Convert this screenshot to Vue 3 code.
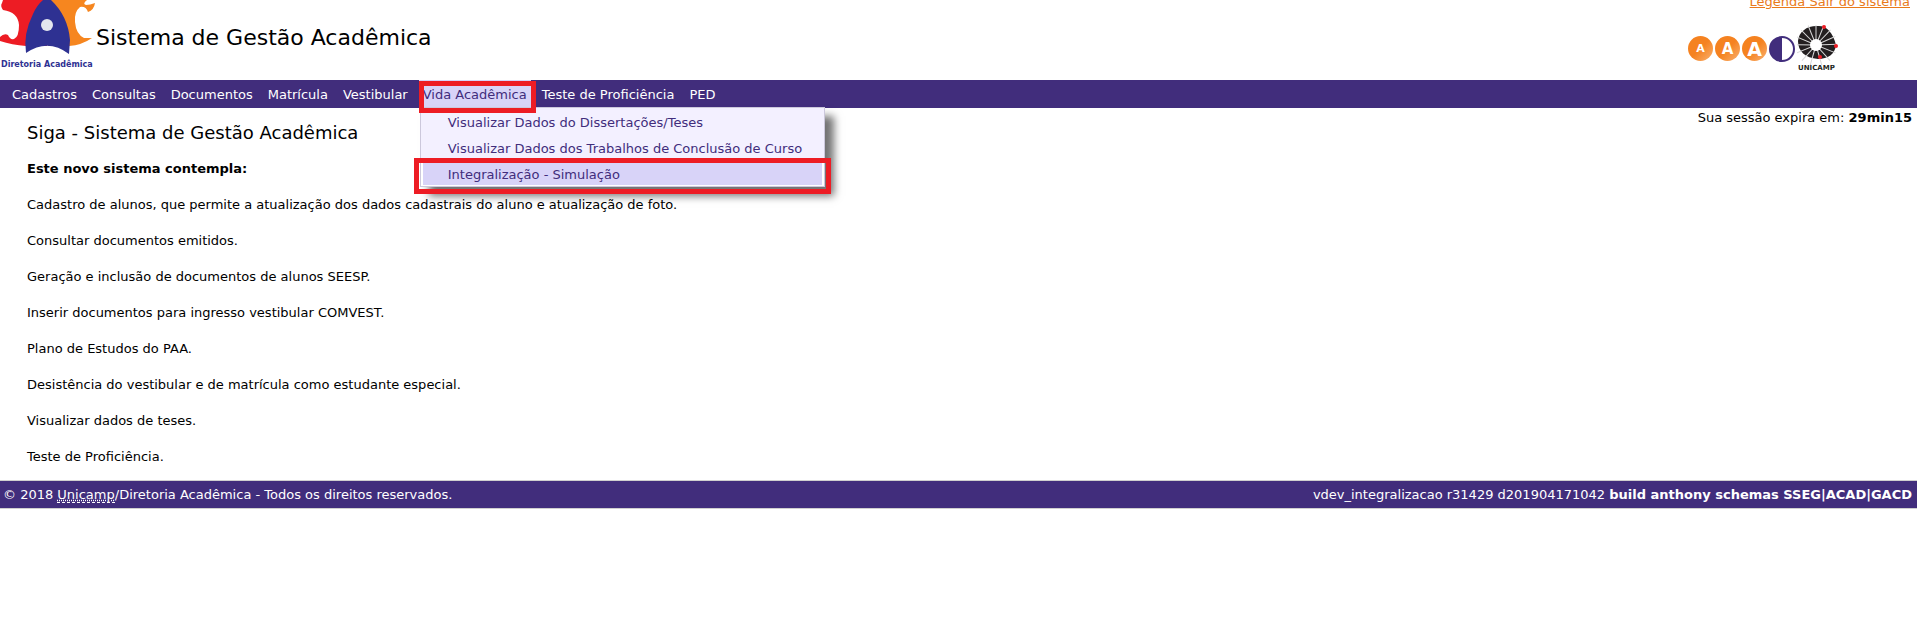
<template>
  <div class="page">
    <header class="header">
      <a href="#" class="logo" aria-label="Diretoria Acadêmica">
        <svg width="96" height="72" viewBox="0 0 96 72">
          <path d="M3 0H47V46H26Q12 45 0 41V37Q4 33 8 35Q10 40 14 39Q19 37 19 25Q18 12 3 10Q0 6 2 3Z" fill="#ed1c24" />
          <path d="M48 0H87Q82 4 86 5Q90 5 95 3Q94 10 88 12Q86 6 80 7Q74 12 75 22Q76 34 84 38L92 38Q82 45 69 46H48Z" fill="#f6861f" />
          <path d="M43 0H51Q68 16 70 40L69 54Q48 38 26 53Q23 34 33 14Q37 5 43 0Z" fill="#2e3192" />
          <circle cx="47" cy="25" r="6" fill="#e4e6ee" />
          <text x="1" y="67" class="logo-text">Diretoria Acadêmica</text>
        </svg>
      </a>
      <h1 class="title">Sistema de Gestão Acadêmica</h1>
      <div class="tools">
        <div class="links">
          <a href="#">Legenda</a><a href="#">&nbsp;Sair do sistema</a>
        </div>
        <div class="icons">
          <button v-for="size in fontSizes" :key="size" type="button" class="font-btn" :class="size" :aria-label="'Fonte ' + size">A</button>
          <button type="button" class="contrast" aria-label="Contraste">
            <svg width="26" height="26" viewBox="0 0 26 26">
              <circle cx="13" cy="13" r="12" fill="#fff" stroke="#412d7c" stroke-width="2" />
              <path d="M13 1A12 12 0 0 0 13 25Z" fill="#412d7c" />
            </svg>
          </button>
          <a href="#" class="unicamp" aria-label="Unicamp">
            <svg width="41" height="46" viewBox="0 0 41 46">
              <path d="M20 1C29 0 36 7 39 20C38 29 31 34 21 34C8 33 1 26 1 16C2 7 9 1 20 1Z" fill="#231f20" />
              <line v-for="angle in rays" :key="angle" x1="19" y1="20" x2="19" y2="-1" stroke="#d8d8d8" :transform="`rotate(${angle} 19 20)`" />
              <circle cx="19" cy="20" r="6" fill="#fff" />
              <circle cx="27" cy="2" r="2" fill="#ed1c24" />
              <circle cx="39" cy="21" r="2" fill="#ed1c24" />
              <circle cx="23" cy="32" r="2" fill="#ed1c24" />
              <text x="1" y="45" class="unicamp-text">UNICAMP</text>
            </svg>
          </a>
        </div>
      </div>
    </header>

    <nav>
      <ul class="menu">
        <li v-for="item in menu" :key="item.label" :class="{ active: open === item.label }">
          <a href="#" @click.prevent="open = item.label">{{ item.label }}</a>
          <ul v-if="item.children && open === item.label" class="submenu">
            <li v-for="child in item.children" :key="child" :class="{ selected: child === selected }">
              <a href="#" @click.prevent="selected = child">{{ child }}</a>
            </li>
          </ul>
        </li>
      </ul>
    </nav>

    <main class="content">
      <div class="text">
        <h2>Siga - Sistema de Gestão Acadêmica</h2>
        <p><strong>Este novo sistema contempla:</strong></p>
        <p v-for="line in features" :key="line">{{ line }}</p>
      </div>
      <div class="session">Sua sessão expira em: <strong>29min15</strong></div>
    </main>

    <footer class="footer">
      <span>© 2018 <abbr title="Universidade Estadual de Campinas">Unicamp</abbr>/Diretoria Acadêmica - Todos os direitos reservados.</span>
      <span>vdev_integralizacao r31429 d201904171042 <strong>build anthony schemas SSEG|ACAD|GACD</strong></span>
    </footer>
  </div>
</template>

<script setup>
import { ref } from 'vue';

const open = ref('Vida Acadêmica');
const selected = ref('Integralização - Simulação');

const fontSizes = ['small', 'medium', 'large'];
const rays = [0, 22, 44, 66, 88, 112, 138, 164, 196, 222, 248, 271, 293, 315, 338];

const menu = [
  { label: 'Cadastros' },
  { label: 'Consultas' },
  { label: 'Documentos' },
  { label: 'Matrícula' },
  { label: 'Vestibular' },
  {
    label: 'Vida Acadêmica',
    children: [
      'Visualizar Dados do Dissertações/Teses',
      'Visualizar Dados dos Trabalhos de Conclusão de Curso',
      'Integralização - Simulação',
    ],
  },
  { label: 'Teste de Proficiência' },
  { label: 'PED' },
];

const features = [
  'Cadastro de alunos, que permite a atualização dos dados cadastrais do aluno e atualização de foto.',
  'Consultar documentos emitidos.',
  'Geração e inclusão de documentos de alunos SEESP.',
  'Inserir documentos para ingresso vestibular COMVEST.',
  'Plano de Estudos do PAA.',
  'Desistência do vestibular e de matrícula como estudante especial.',
  'Visualizar dados de teses.',
  'Teste de Proficiência.',
];
</script>

<style>
body {
  background: #fff;
}
</style>

<style scoped>
.page {
  font-family: Verdana, "DejaVu Sans", sans-serif;
  font-size: 13px;
  line-height: 16px;
  color: #000;
}

.header {
  display: flex;
  align-items: flex-start;
  height: 80px;
  overflow: hidden;
}

.logo-text {
  font-size: 8px;
  font-weight: bold;
  fill: #2e3192;
}

.title {
  margin: 25px 0 0;
  font-size: 22px;
  font-weight: normal;
  line-height: 26px;
}

.tools {
  display: flex;
  flex-direction: column;
  align-items: flex-end;
  gap: 15px;
  margin: -6px 7px 0 auto;
}

.links a {
  color: #e97a1a;
}

.icons {
  display: flex;
  align-items: flex-start;
  gap: 2px;
  margin-right: 72px;
}

.font-btn,
.contrast {
  margin-top: 11px;
  padding: 0;
  border: 0;
  cursor: pointer;
}

.font-btn {
  width: 25px;
  height: 25px;
  border-radius: 50%;
  background: linear-gradient(135deg, #f58220 50%, #f9b170);
  color: #fff;
  font-family: inherit;
  font-weight: bold;
  line-height: 24px;
}

.small {
  font-size: 11px;
}

.medium {
  font-size: 15px;
}

.large {
  font-size: 19px;
}

.contrast {
  background: none;
}

.contrast svg,
.logo svg,
.unicamp svg {
  display: block;
}

.unicamp-text {
  font-family: "DejaVu Sans", sans-serif;
  font-size: 7px;
  font-weight: bold;
  fill: #231f20;
}

.menu,
.submenu {
  margin: 0;
  padding: 0;
  list-style: none;
}

.menu {
  display: flex;
  gap: 7px;
  padding-left: 8px;
  background: #412d7c;
}

.menu > li {
  position: relative;
}

.menu a {
  display: block;
  padding: 2px 4px 0;
  line-height: 26px;
  color: #fff;
  text-decoration: none;
  white-space: nowrap;
}

.menu .active > a {
  background: #d8d3f8;
  color: #412d7c;
}

/* red frame around the open entry */
.active::after {
  content: "";
  position: absolute;
  inset: 1px -5px -5px 0;
  z-index: 3;
  border: 5px solid #ed1c24;
  pointer-events: none;
}

.submenu {
  position: absolute;
  top: 27px;
  left: 1px;
  z-index: 2;
  border: 1px solid #ccc8dc;
  background: #f3f0ff;
  box-shadow: 9px 9px 8px rgba(0, 0, 0, 0.55);
}

.submenu li {
  position: relative;
}

.menu .submenu a {
  padding: 4px 22px 0 27px;
  line-height: 22px;
  color: #412d7c;
}

.submenu .selected a {
  background: #d8d3f8;
  box-shadow: inset -2px -1px #fff, inset 2px 0 #fff;
}

.selected::after {
  content: "";
  position: absolute;
  inset: -2px -7px -8px;
  border: 5px solid #ed1c24;
  pointer-events: none;
}

.content {
  display: flex;
  justify-content: space-between;
  align-items: flex-start;
  padding: 2px 5px 15px 27px;
}

.content h2 {
  margin: 11px 0 16px;
  font-size: 18px;
  font-weight: normal;
  line-height: 24px;
}

.content p {
  margin: 0;
  padding: 0 0 20px;
}

.content p:last-child {
  padding: 0;
}

.footer {
  display: flex;
  justify-content: space-between;
  padding: 6px 5px 5px 3px;
  border: solid #d0cfcf;
  border-width: 1px 0;
  background: #412d7c;
  color: #fff;
}

.footer abbr {
  border-bottom: 1px dashed #fff;
  text-decoration: underline dotted;
}
</style>
